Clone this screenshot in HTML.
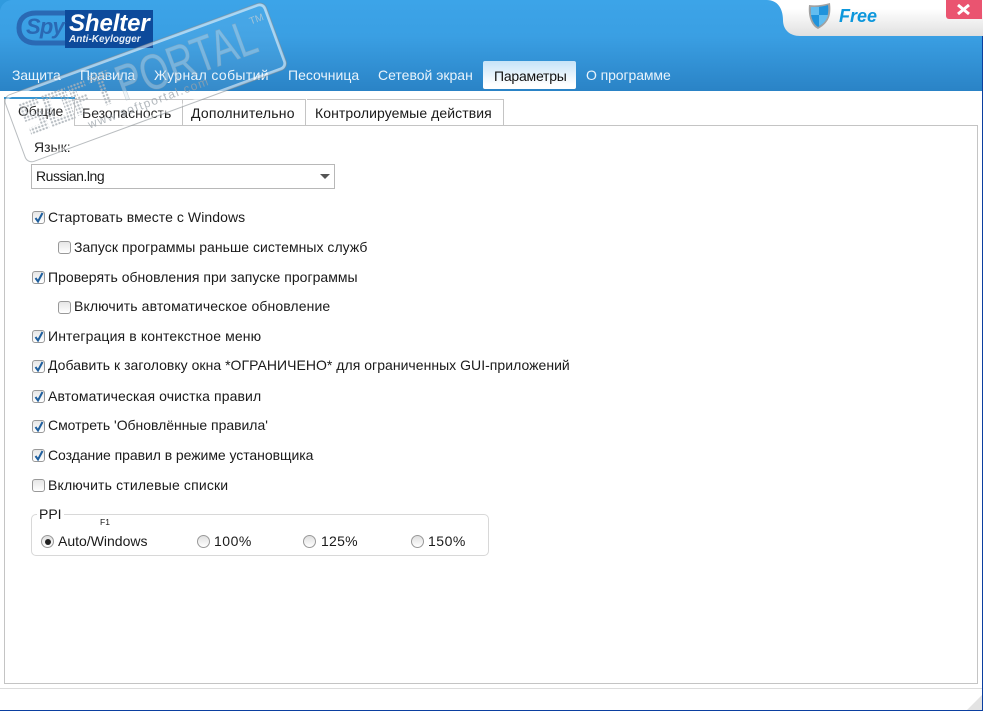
<!DOCTYPE html>
<html><head><meta charset="utf-8"><style>
html,body{margin:0;padding:0;background:#fff}
#p{position:relative;width:983px;height:711px;overflow:hidden;background:#fff;font-family:"Liberation Sans",sans-serif;font-size:14px;color:#1a1a1a}
#p div{position:absolute;white-space:nowrap}
.t{line-height:18px;height:18px}
.nav{color:#e8f3fb;top:66px}
.cb{width:11px;height:11px;border:1px solid #999;border-radius:3px;background:linear-gradient(#e6e6e6,#fff)}
.cb svg{position:absolute;left:0;top:-1px}
.r{width:11px;height:11px;border:1px solid #999;border-radius:50%;background:linear-gradient(#e0e0e0,#fff)}
.tab{top:99px;height:25px;border:1px solid #c4c4c4;border-left:none;background:#fff}
</style></head><body><div id="p">
<div style="left:0;top:0;width:983px;height:91px;background:linear-gradient(#3ca4e8 0,#3a9fe3 40%,#2a83c6 100%)"></div>
<svg style="position:absolute;left:0;top:0" width="14" height="14"><path d="M0 0H11C5 1 1 5 0 11Z" fill="#309ade"/></svg>
<!-- free panel -->
<svg style="position:absolute;left:767px;top:0" width="216" height="37" viewBox="0 0 216 37">
<defs><linearGradient id="g" x1="0" y1="0" x2="0" y2="1"><stop offset=".25" stop-color="#fff"/><stop offset="1" stop-color="#e0e0e0"/></linearGradient></defs>
<path d="M0 0C10 0 16 8 16 20C16 30 23 36 33 36H216V0Z" fill="url(#g)"/></svg>
<svg style="position:absolute;left:807px;top:2px" width="26" height="28" viewBox="0 0 26 28"><path d="M2 3 C8 4 16 3 23 1 C24 10 24 20 11 27 C3 23 1 12 2 3Z" fill="#a2a2a2"/><path d="M4 5 C9 5 15 5 21 3 C22 11 21 19 11 25 C5 21 3 13 4 5Z" fill="#1f93dc"/><path d="M4 5 L12 5 L12 13 L4 13Z M12 13 L21 13 C20 18 16 22 12 24Z" fill="#62bdf0"/></svg>
<div class="t" style="left:839px;top:6px;font:italic bold 18px/20px 'Liberation Sans',sans-serif;color:#0d97dc">Free</div>
<div style="left:946px;top:0;width:36px;height:19px;background:#ea5470;border-radius:0 0 0 3px"></div>
<svg style="position:absolute;left:956px;top:4px" width="15" height="11"><path d="M2 1L13 10M13 1L2 10" stroke="#fff" stroke-width="3"/></svg>
<!-- logo -->
<svg style="position:absolute;left:16px;top:10px" width="140" height="40" viewBox="0 0 140 40">
<path d="M49 3 H20 C9 3 3 9 3 18 C3 27 9 33 20 33 H49" fill="none" stroke="#2a69b4" stroke-width="5"/>
<rect x="49" y="0" width="88" height="38" fill="#0d4a9b"/></svg>
<div style="left:26px;top:14px;font:italic bold 22px/26px 'Liberation Sans',sans-serif;color:#2a69b4;letter-spacing:-.8px">Spy</div>
<div style="left:69px;top:11px;font:italic bold 24px/26px 'Liberation Sans',sans-serif;color:#fff;letter-spacing:-.1px">Shelter</div>
<div style="left:69px;top:33px;font:italic bold 10px/14px 'Liberation Sans',sans-serif;color:#e4edf7">Anti-Keylogger</div>
<!-- nav -->
<div class="t nav" style="left:12px;letter-spacing:-.17px">Защита</div>
<div class="t nav" style="left:80px;letter-spacing:-.28px">Правила</div>
<div class="t nav" style="left:154px;letter-spacing:.35px">Журнал событий</div>
<div class="t nav" style="left:288px">Песочница</div>
<div class="t nav" style="left:378px">Сетевой экран</div>
<div style="left:483px;top:61px;width:93px;height:28px;background:linear-gradient(#c6e3f8,#fff 85%);border-radius:2px"></div>
<div class="t" style="left:494px;top:67px;color:#111;letter-spacing:-.22px">Параметры</div>
<div class="t nav" style="left:586px;letter-spacing:-.09px">О программе</div>
<!-- content box -->
<div style="left:4px;top:125px;width:972px;height:557px;border:1px solid #c4c4c4;background:#fff"></div>
<div style="left:4px;top:97px;width:69px;height:29px;background:#fff;border-left:1px solid #c4c4c4;border-right:1px solid #c4c4c4"></div>
<div style="left:4px;top:97px;width:71px;height:2px;background:#2a8fd0"></div>
<div class="tab" style="left:75px;width:107px"></div>
<div class="tab" style="left:183px;width:122px"></div>
<div class="tab" style="left:307px;width:196px"></div>
<div class="t" style="left:18px;top:102px;letter-spacing:-.2px">Общие</div>
<div class="t" style="left:82px;top:104px">Безопасность</div>
<div class="t" style="left:191px;top:104px;letter-spacing:.23px">Дополнительно</div>
<div class="t" style="left:315px;top:104px;letter-spacing:.08px">Контролируемые действия</div>
<div class="t" style="left:34px;top:138px">Язык:</div>
<div style="left:31px;top:164px;width:302px;height:23px;border:1px solid #b8b8b8;background:#fff"></div>
<div class="t" style="left:36px;top:167px;letter-spacing:-.45px">Russian.lng</div>
<svg style="position:absolute;left:320px;top:174px" width="10" height="6"><path d="M0 0H10L5 5Z" fill="#555"/></svg>

<div class="cb" style="left:32px;top:211px"><svg width="12" height="13"><path d="M2.5 7L5 10.5L9.5 2" fill="none" stroke="#1f5f9e" stroke-width="2"/></svg></div>
<div class="t" style="left:48px;top:208px;letter-spacing:.07px">Стартовать вместе с Windows</div>
<div class="cb" style="left:58px;top:241px"></div>
<div class="t" style="left:74px;top:238px;letter-spacing:.03px">Запуск программы раньше системных служб</div>
<div class="cb" style="left:32px;top:271px"><svg width="12" height="13"><path d="M2.5 7L5 10.5L9.5 2" fill="none" stroke="#1f5f9e" stroke-width="2"/></svg></div>
<div class="t" style="left:48px;top:268px;letter-spacing:.02px">Проверять обновления при запуске программы</div>
<div class="cb" style="left:58px;top:301px"></div>
<div class="t" style="left:74px;top:297px;letter-spacing:.11px">Включить автоматическое обновление</div>
<div class="cb" style="left:32px;top:330px"><svg width="12" height="13"><path d="M2.5 7L5 10.5L9.5 2" fill="none" stroke="#1f5f9e" stroke-width="2"/></svg></div>
<div class="t" style="left:48px;top:327px;letter-spacing:.13px">Интеграция в контекстное меню</div>
<div class="cb" style="left:32px;top:360px"><svg width="12" height="13"><path d="M2.5 7L5 10.5L9.5 2" fill="none" stroke="#1f5f9e" stroke-width="2"/></svg></div>
<div class="t" style="left:48px;top:356px;letter-spacing:.03px">Добавить к заголовку окна *ОГРАНИЧЕНО* для ограниченных GUI-приложений</div>
<div class="cb" style="left:32px;top:390px"><svg width="12" height="13"><path d="M2.5 7L5 10.5L9.5 2" fill="none" stroke="#1f5f9e" stroke-width="2"/></svg></div>
<div class="t" style="left:48px;top:387px;letter-spacing:.1px">Автоматическая очистка правил</div>
<div class="cb" style="left:32px;top:420px"><svg width="12" height="13"><path d="M2.5 7L5 10.5L9.5 2" fill="none" stroke="#1f5f9e" stroke-width="2"/></svg></div>
<div class="t" style="left:48px;top:416px;letter-spacing:-.03px">Смотреть 'Обновлённые правила'</div>
<div class="cb" style="left:32px;top:449px"><svg width="12" height="13"><path d="M2.5 7L5 10.5L9.5 2" fill="none" stroke="#1f5f9e" stroke-width="2"/></svg></div>
<div class="t" style="left:48px;top:446px;letter-spacing:-.05px">Создание правил в режиме установщика</div>
<div class="cb" style="left:32px;top:479px"></div>
<div class="t" style="left:48px;top:476px;letter-spacing:.16px">Включить стилевые списки</div>

<div style="left:31px;top:514px;width:456px;height:40px;border:1px solid #d8d8d8;border-radius:5px"></div>
<div class="t" style="left:37px;top:505px;background:#fff;padding:0 2px">PPI</div>
<div style="left:100px;top:517px;font-size:8.5px;line-height:11px">F1</div>
<div class="r" style="left:41px;top:535px"><div style="left:2.5px;top:2.5px;width:6px;height:6px;background:#222;border-radius:50%"></div></div>
<div class="t" style="left:58px;top:532px">Auto/Windows</div>
<div class="r" style="left:197px;top:535px"></div>
<div class="t" style="left:214px;top:532px;letter-spacing:.5px">100%</div>
<div class="r" style="left:303px;top:535px"></div>
<div class="t" style="left:321px;top:532px;letter-spacing:.25px">125%</div>
<div class="r" style="left:411px;top:535px"></div>
<div class="t" style="left:428px;top:532px;letter-spacing:.5px">150%</div>

<!-- footer -->
<div style="left:0;top:688px;width:982px;height:1px;background:#dcdcdc"></div>
<svg style="position:absolute;left:967px;top:695px" width="15" height="15"><path d="M15 0V15H0Z" fill="#e3e3e3"/></svg>
<div style="left:982px;top:36px;width:1px;height:675px;background:#0b3fa0"></div>
<div style="left:0;top:710px;width:983px;height:1px;background:#0b3fa0"></div>

<!-- watermark -->
<svg style="position:absolute;left:0;top:0" width="300" height="175" viewBox="0 0 300 175">
<defs><pattern id="d" width="3.4" height="3.4" patternUnits="userSpaceOnUse"><circle cx="1.7" cy="1.7" r="1.2" fill="#aab2b8" fill-opacity=".85"/></pattern></defs>
<g transform="translate(5 98) rotate(-20.2)">
<rect x="0" y="0" width="275" height="68" rx="6" fill="#fff" fill-opacity=".06" stroke="#fff" stroke-opacity=".55" stroke-width="3"/>
<rect x="-1.5" y="-1.5" width="278" height="71" rx="7" fill="none" stroke="#7f868c" stroke-opacity=".55" stroke-width="1"/>
<path d="M30 14H14V26H28V40H12" fill="none" stroke="url(#d)" stroke-width="7"/>
<path d="M38 14H56V40H38Z" fill="none" stroke="url(#d)" stroke-width="7"/>
<path d="M80 14H66V42M60 27H78" fill="none" stroke="url(#d)" stroke-width="7"/>
<path d="M84 12H106M95 12V42" fill="none" stroke="url(#d)" stroke-width="7"/>
<text x="110" y="44" font-family="Liberation Sans,sans-serif" font-size="50" fill="#d6e2ea" fill-opacity=".38" stroke="#8ea2b0" stroke-opacity=".4" stroke-width=".8" textLength="146" lengthAdjust="spacingAndGlyphs">PORTAL</text>
<text x="256" y="16" font-family="Liberation Sans,sans-serif" font-size="10" fill="#b8cad6" fill-opacity=".8">TM</text>
<text x="69" y="58" font-family="Liberation Sans,sans-serif" font-size="12" fill="#9aa2a8" fill-opacity=".75" textLength="127">www.softportal.com</text>
</g></svg>
</div></body></html>
